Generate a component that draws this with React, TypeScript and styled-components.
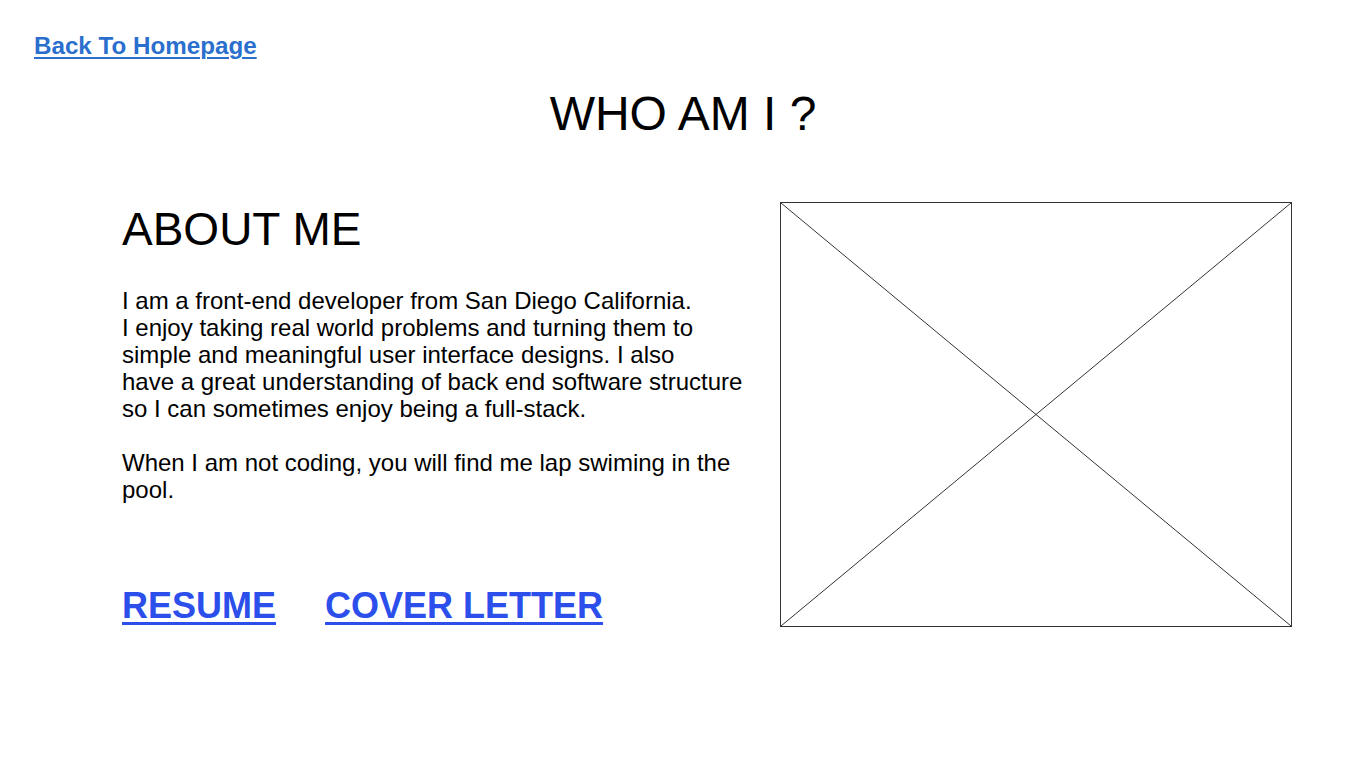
import styled, { createGlobalStyle } from 'styled-components';

const GlobalStyle = createGlobalStyle`
  html, body {
    margin: 0;
    padding: 0;
    background: #ffffff;
    font-family: 'Liberation Sans', Arial, sans-serif;
    color: #000000;
  }
`;

const Page = styled.div`
  width: 1366px;
  height: 768px;
  box-sizing: border-box;
  padding-top: 32px;
  display: flex;
  flex-direction: column;
`;

const BackLink = styled.a`
  align-self: flex-start;
  margin-left: 34px;
  font-size: 24.2px;
  line-height: 28px;
  font-weight: 700;
  color: #2a6fce;
  text-decoration: underline;
  text-decoration-thickness: 2px;
  text-underline-offset: 3px;
`;

const Title = styled.h1`
  margin: 26px 0 0;
  text-align: center;
  font-size: 48px;
  line-height: 56px;
  font-weight: 400;
`;

const Content = styled.div`
  margin-top: 60px;
  display: flex;
  align-items: flex-start;
  padding-left: 122px;
`;

const AboutColumn = styled.section`
  width: 658px;
  display: flex;
  flex-direction: column;
`;

const Heading = styled.h2`
  margin: 0;
  font-size: 46px;
  line-height: 54px;
  font-weight: 400;
`;

const Bio = styled.p`
  margin: 31px 0 0;
  font-size: 24px;
  line-height: 27px;
  white-space: nowrap;
`;

const Links = styled.div`
  margin-top: 82px;
  display: flex;
  gap: 49px;
`;

const DocLink = styled.a`
  font-size: 36px;
  line-height: 42px;
  font-weight: 700;
  color: #2c4fec;
  text-decoration: underline;
  text-decoration-thickness: 3px;
  text-underline-offset: 4px;
`;

const Placeholder = styled.div`
  width: 512px;
  height: 425px;
  box-sizing: border-box;
  border: 1px solid #333333;
  svg {
    display: block;
    width: 100%;
    height: 100%;
  }
`;

const App = () => (
  <>
    <GlobalStyle />
    <Page>
      <BackLink href='#'>Back To Homepage</BackLink>
      <Title>WHO AM I ?</Title>
      <Content>
        <AboutColumn>
          <Heading>ABOUT ME</Heading>
          <Bio>
            I am a front-end developer from San Diego California.
            <br />
            I enjoy taking real world problems and turning them to
            <br />
            simple and meaningful user interface designs. I also
            <br />
            have a great understanding of back end software structure
            <br />
            so I can sometimes enjoy being a full-stack.
            <br />
            <br />
            When I am not coding, you will find me lap swiming in the
            <br />
            pool.
          </Bio>
          <Links>
            <DocLink href='#'>RESUME</DocLink>
            <DocLink href='#'>COVER LETTER</DocLink>
          </Links>
        </AboutColumn>
        <Placeholder>
          <svg viewBox='0 0 510 423' preserveAspectRatio='none'>
            <line x1='0' y1='0' x2='510' y2='423' stroke='#333' strokeWidth='1' />
            <line x1='510' y1='0' x2='0' y2='423' stroke='#333' strokeWidth='1' />
          </svg>
        </Placeholder>
      </Content>
    </Page>
  </>
);

export default App;
